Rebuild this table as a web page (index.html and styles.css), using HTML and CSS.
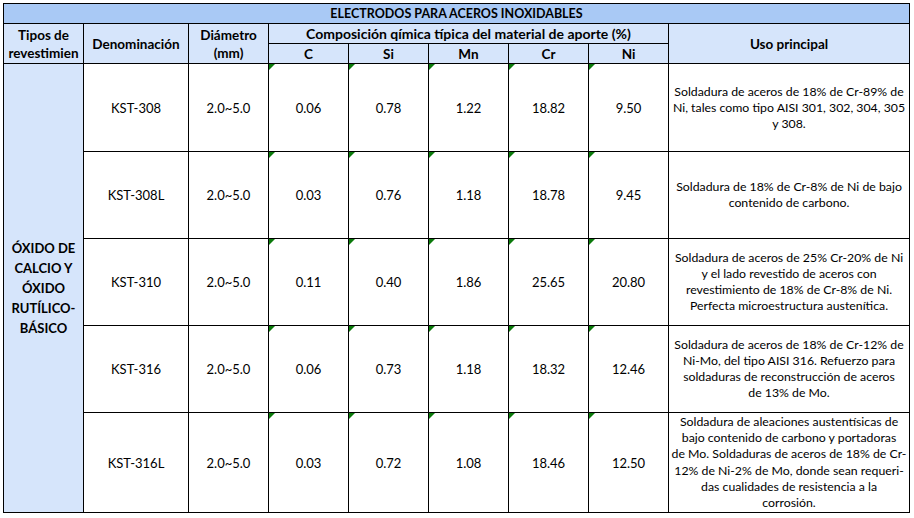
FILE: index.html
```html
<!DOCTYPE html>
<html lang="es">
<head>
<meta charset="utf-8">
<title>Electrodos para aceros inoxidables</title>
<link rel="stylesheet" href="styles.css">
</head>
<body>
<table class="sheet">
  <colgroup>
    <col class="c-tipo"><col class="c-den"><col class="c-num"><col class="c-num"><col class="c-num"><col class="c-num"><col class="c-num"><col class="c-num"><col class="c-uso">
  </colgroup>
  <tr class="r-title"><th colspan="9" class="title">ELECTRODOS PARA ACEROS INOXIDABLES</th></tr>
  <tr class="r-head">
    <th rowspan="2" class="head">Tipos de<br>revestimien</th>
    <th rowspan="2" class="head">Denominación</th>
    <th rowspan="2" class="head">Diámetro<br>(mm)</th>
    <th colspan="5" class="head comp">Composición qímica típica del material de aporte (%)</th>
    <th rowspan="2" class="head">Uso principal</th>
  </tr>
  <tr class="r-head">
    <th class="head">C</th><th class="head">Si</th><th class="head">Mn</th><th class="head">Cr</th><th class="head">Ni</th>
  </tr>
  <tr class="r-data">
    <td rowspan="5" class="tipo">ÓXIDO DE<br>CALCIO Y<br>ÓXIDO<br>RUTÍLICO-<br>BÁSICO</td>
    <td>KST-308</td><td>2.0~5.0</td>
    <td class="n">0.06</td><td class="n">0.78</td><td class="n">1.22</td><td class="n">18.82</td><td class="n">9.50</td>
    <td class="uso">Soldadura de aceros de 18% de Cr-89% de<br>Ni, tales como tipo AISI 301, 302, 304, 305<br>y 308.</td>
  </tr>
  <tr class="r-b">
    <td>KST-308L</td><td>2.0~5.0</td>
    <td class="n">0.03</td><td class="n">0.76</td><td class="n">1.18</td><td class="n">18.78</td><td class="n">9.45</td>
    <td class="uso">Soldadura de 18% de Cr-8% de Ni de bajo<br>contenido de carbono.</td>
  </tr>
  <tr class="r-b">
    <td>KST-310</td><td>2.0~5.0</td>
    <td class="n">0.11</td><td class="n">0.40</td><td class="n">1.86</td><td class="n">25.65</td><td class="n">20.80</td>
    <td class="uso">Soldadura de aceros de 25% Cr-20% de Ni<br>y el lado revestido de aceros con<br>revestimiento de 18% de Cr-8% de Ni.<br>Perfecta microestructura austenítica.</td>
  </tr>
  <tr class="r-b">
    <td>KST-316</td><td>2.0~5.0</td>
    <td class="n">0.06</td><td class="n">0.73</td><td class="n">1.18</td><td class="n">18.32</td><td class="n">12.46</td>
    <td class="uso">Soldadura de aceros de 18% de Cr-12% de<br>Ni-Mo, del tipo AISI 316. Refuerzo para<br>soldaduras de reconstrucción de aceros<br>de 13% de Mo.</td>
  </tr>
  <tr class="r-last">
    <td>KST-316L</td><td>2.0~5.0</td>
    <td class="n">0.03</td><td class="n">0.72</td><td class="n">1.08</td><td class="n">18.46</td><td class="n">12.50</td>
    <td class="uso uso-tight">Soldadura de aleaciones austentísicas de<br>bajo contenido de carbono y portadoras<br>de Mo. Soldaduras de aceros de 18% de Cr-<br>12% de Ni-2% de Mo, donde sean requeri-<br>das cualidades de resistencia a la<br>corrosión.</td>
  </tr>
</table>
</body>
</html>
```

FILE: styles.css
```css
html, body {
  margin: 0;
  background: #ffffff;
}
body {
  padding: 3px 0 0 3px;
  font-family: Lato, "Open Sans", "Liberation Sans", sans-serif;
  font-size: 13px;
  color: #000;
}
.sheet {
  border-collapse: collapse;
  table-layout: fixed;
  width: 906px;
}
.c-tipo { width: 80px; }
.c-den { width: 105px; }
.c-num { width: 80px; }
.c-uso { width: 241px; }
.sheet th, .sheet td {
  border: 1px solid #000;
  padding: 0;
  text-align: center;
  vertical-align: middle;
  overflow: hidden;
}
.r-title { height: 20px; }
.r-head { height: 20px; }
.r-data { height: 88px; }
.r-b { height: 87px; }
.r-last { height: 100px; }
.title {
  background: #a9c9f5;
  font-weight: 700;
  font-size: 12.5px;
  line-height: 18px;
}
.head {
  background: #d6e5fb;
  font-weight: 700;
  font-size: 13.5px;
  line-height: 18px;
  white-space: nowrap;
}
.head.comp {
  font-size: 14px;
}
.sheet td {
  line-height: 16px;
}
.sheet .tipo {
  background: #d6e5fb;
  font-weight: 700;
  font-size: 13px;
  line-height: 20px;
}
.n {
  position: relative;
}
.n::before {
  content: "";
  position: absolute;
  left: 0;
  top: 0;
  width: 0;
  height: 0;
  border-top: 6px solid #0b7a0b;
  border-right: 6px solid transparent;
}
.sheet .uso {
  padding: 0 1px;
  font-size: 12.3px;
  white-space: nowrap;
}
.sheet .uso-tight {
  line-height: 16.2px;
}
```
